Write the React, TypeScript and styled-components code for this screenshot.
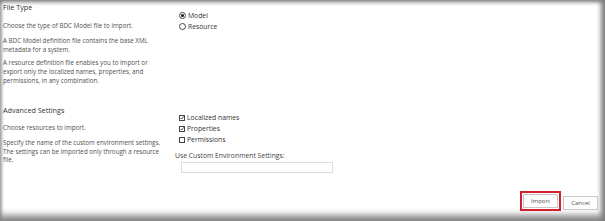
import React from 'react';
import styled, { createGlobalStyle } from 'styled-components';

const GlobalStyle = createGlobalStyle`
  html, body {
    margin: 0;
    padding: 0;
    background: #fff;
  }
  body {
    font-family: "Open Sans", "Noto Sans", sans-serif;
    color: #444;
  }
`;

const Frame = styled.div`
  width: 605px;
  height: 221px;
  box-sizing: border-box;
  padding: 2px 7px 0 3px;
  background: #fff;
  display: flex;
  flex-direction: column;
  overflow: hidden;
  box-shadow:
    inset 0 4px 4px -2px #7a7a7a,
    inset -6px 0 5px -2px #808080,
    inset 0 -9px 6px -3px #8a8a8a,
    inset 3px 0 3px -1px #b0b0b0;
`;

const Section = styled.div<{ $height: number }>`
  display: grid;
  grid-template-columns: 172px 1fr;
  height: ${(p) => p.$height}px;
`;

const Info = styled.div<{ $top?: number }>`
  display: flex;
  flex-direction: column;
  padding-top: ${(p) => p.$top ?? 0}px;
`;

const Title = styled.div`
  font-size: 7.2px;
  line-height: 10px;
  color: #333;
`;

const Para = styled.p<{ $top: number }>`
  margin: ${(p) => p.$top}px 0 0;
  font-size: 6.25px;
  line-height: 8.8px;
  color: #505050;
  white-space: nowrap;
`;

const Controls = styled.div<{ $top: number }>`
  display: flex;
  flex-direction: column;
  padding-top: ${(p) => p.$top}px;
`;

const Option = styled.label`
  display: flex;
  align-items: center;
  gap: 2px;
  height: 11px;
  padding-left: 4px;
  font-size: 6.8px;
  color: #333;
`;

const Radio = styled.span<{ $on?: boolean }>`
  width: 5px;
  height: 5px;
  border: 1px solid #444;
  border-radius: 50%;
  display: flex;
  align-items: center;
  justify-content: center;
  &::after {
    content: '';
    width: 3px;
    height: 3px;
    border-radius: 50%;
    background: ${(p) => (p.$on ? '#111' : 'transparent')};
  }
`;

const Box = styled.span`
  width: 6px;
  height: 6px;
  box-sizing: border-box;
  border: 1px solid #444;
  display: flex;
  align-items: center;
  justify-content: center;
`;

const FieldLabel = styled.div`
  margin-top: 6px;
  font-size: 6.8px;
  line-height: 9px;
  color: #444;
`;

const Field = styled.div`
  margin: 2px 0 0 6px;
  width: 152px;
  height: 11px;
  border: 1px solid #dcdcdc;
  box-sizing: border-box;
  background: #fff;
`;

const Footer = styled.div`
  display: flex;
  justify-content: flex-end;
  align-items: flex-end;
  gap: 2px;
  margin-top: auto;
  padding-bottom: 10px;
`;

const Highlight = styled.div`
  display: flex;
  border: 2px solid #d3202f;
  padding: 1px;
`;

const Button = styled.button<{ $drop?: number }>`
  width: 35px;
  height: 14px;
  margin-bottom: ${(p) => p.$drop ?? 0}px;
  padding: 0;
  border: 1px solid #c8c8c8;
  box-sizing: border-box;
  background: #fdfdfd;
  font-family: inherit;
  font-size: 6px;
  color: #555;
`;

const Check = () => (
  <svg width="6" height="6" viewBox="0 0 6 6">
    <path d="M0.8 3 L2.4 4.6 L5.4 0.6" fill="none" stroke="#111" strokeWidth="1.1" />
  </svg>
);

export default function App() {
  return (
    <>
      <GlobalStyle />
      <Frame>
        <Section $height={100}>
          <Info>
            <Title>File Type</Title>
            <Para $top={10}>Choose the type of BDC Model file to import.</Para>
            <Para $top={6}>
              A BDC Model definition file contains the base XML
              <br />
              metadata for a system.
            </Para>
            <Para $top={5}>
              A resource definition file enables you to import or
              <br />
              export only the localized names, properties, and
              <br />
              permissions, in any combination.
            </Para>
          </Info>
          <Controls $top={8}>
            <Option>
              <Radio $on />
              Model
            </Option>
            <Option>
              <Radio />
              Resource
            </Option>
          </Controls>
        </Section>
        <Section $height={80}>
          <Info $top={3}>
            <Title>Advanced Settings</Title>
            <Para $top={9}>Choose resources to import.</Para>
            <Para $top={6}>
              Specify the name of the custom environment settings.
              <br />
              The settings can be imported only through a resource
              <br />
              file.
            </Para>
          </Info>
          <Controls $top={10}>
            <Option>
              <Box>
                <Check />
              </Box>
              Localized names
            </Option>
            <Option>
              <Box>
                <Check />
              </Box>
              Properties
            </Option>
            <Option>
              <Box />
              Permissions
            </Option>
            <FieldLabel>Use Custom Environment Settings:</FieldLabel>
            <Field />
          </Controls>
        </Section>
        <Footer>
          <Highlight>
            <Button>Import</Button>
          </Highlight>
          <Button $drop={1}>Cancel</Button>
        </Footer>
      </Frame>
    </>
  );
}
